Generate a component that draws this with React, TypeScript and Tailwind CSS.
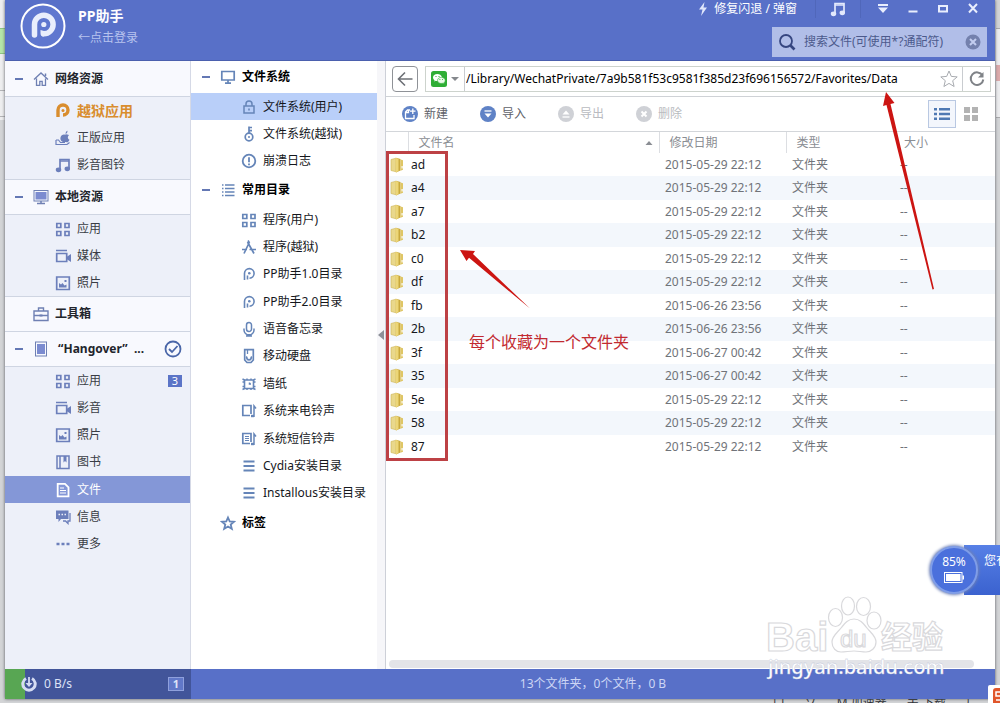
// src/App.tsx

import { ReactNode } from 'react';

type IconName =
  | 'house' | 'pp' | 'apple' | 'music' | 'monitor' | 'apps' | 'video' | 'photo'
  | 'toolbox' | 'tablet' | 'book' | 'file' | 'chat' | 'more' | 'screen' | 'lock'
  | 'key' | 'alert' | 'list' | 'store' | 'ppLine' | 'mic' | 'disk' | 'wall'
  | 'ring' | 'sms' | 'lines' | 'star';

interface Item {
  label: string;
  icon: IconName;
  badge?: string;
  active?: boolean;
  featured?: boolean;
}

interface FileRow {
  name: string;
  date: string;
}

const networkItems: Item[] = [
  { label: '越狱应用', icon: 'pp', featured: true },
  { label: '正版应用', icon: 'apple' },
  { label: '影音图铃', icon: 'music' },
];

const localItems: Item[] = [
  { label: '应用', icon: 'apps' },
  { label: '媒体', icon: 'video' },
  { label: '照片', icon: 'photo' },
];

const deviceItems: Item[] = [
  { label: '应用', icon: 'apps', badge: '3' },
  { label: '影音', icon: 'video' },
  { label: '照片', icon: 'photo' },
  { label: '图书', icon: 'book' },
  { label: '文件', icon: 'file', active: true },
  { label: '信息', icon: 'chat' },
  { label: '更多', icon: 'more' },
];

const systemItems: Item[] = [
  { label: '文件系统(用户)', icon: 'lock', active: true },
  { label: '文件系统(越狱)', icon: 'key' },
  { label: '崩溃日志', icon: 'alert' },
];

const folderItems: Item[] = [
  { label: '程序(用户)', icon: 'apps' },
  { label: '程序(越狱)', icon: 'store' },
  { label: 'PP助手1.0目录', icon: 'ppLine' },
  { label: 'PP助手2.0目录', icon: 'ppLine' },
  { label: '语音备忘录', icon: 'mic' },
  { label: '移动硬盘', icon: 'disk' },
  { label: '墙纸', icon: 'wall' },
  { label: '系统来电铃声', icon: 'ring' },
  { label: '系统短信铃声', icon: 'sms' },
  { label: 'Cydia安装目录', icon: 'lines' },
  { label: 'Installous安装目录', icon: 'lines' },
];

const files: FileRow[] = [
  { name: 'ad', date: '2015-05-29 22:12' },
  { name: 'a4', date: '2015-05-29 22:12' },
  { name: 'a7', date: '2015-05-29 22:12' },
  { name: 'b2', date: '2015-05-29 22:12' },
  { name: 'c0', date: '2015-05-29 22:12' },
  { name: 'df', date: '2015-05-29 22:12' },
  { name: 'fb', date: '2015-06-26 23:56' },
  { name: '2b', date: '2015-06-26 23:56' },
  { name: '3f', date: '2015-06-27 00:42' },
  { name: '35', date: '2015-06-27 00:42' },
  { name: '5e', date: '2015-05-29 22:12' },
  { name: '58', date: '2015-05-29 22:12' },
  { name: '87', date: '2015-05-29 22:12' },
];

const shapes: Record<IconName, ReactNode> = {
  house: (
    <>
      <path d="M1 8.5 8 2l7 6.5M3.500 7.500V14.300h3.300v-4h2.400v4h3.300V7.500" strokeWidth="1.300" />
      <path d="M12.500 5V2.500" />
    </>
  ),
  pp: (
    <>
      <path d="M3 14V7a5 5 0 1 1 5 5" strokeWidth="3.400" />
      <circle cx="8" cy="7.500" r="1.500" fill="currentColor" stroke="none" />
    </>
  ),
  apple: (
    <>
      <path d="M11 4.200c2 0 3 1 3 1-2 1.500-1 4 .500 4.500-.700 1.800-1.800 2.800-2.800 2.500-1-.300-1.500-.300-2.500 0C6.500 12 5 9.800 5.500 7.500c.400-2.500 3-3.500 4.500-2.800zM10.500 4c0-2 1-3 2-3.200 0 1.700-.700 2.900-2 3.200z" fill="currentColor" stroke="none" />
      <path d="M1 10h2.500l2 2.500H10M1 10v4.500h11l2.500-2" strokeWidth="1.200" />
    </>
  ),
  music: (
    <>
      <path d="M5 13V2.500h9V12" strokeWidth="1.700" />
      <path d="M5 4h9" />
      <ellipse cx="3.500" cy="12.800" rx="2" ry="1.600" fill="currentColor" />
      <ellipse cx="12.300" cy="11.800" rx="2" ry="1.600" fill="currentColor" />
    </>
  ),
  monitor: (
    <>
      <rect x="1" y="1.500" width="14" height="10.500" strokeWidth="1" />
      <rect x="2.500" y="3" width="11" height="7.500" fill="#7b8bd0" stroke="none" />
      <path d="M8 12v2M4 14.500h8" />
    </>
  ),
  apps: <path d="M1.800 2.500h4v4h-4zM10 2.500h4v4h-4zM1.800 10.500h4v4h-4zM10 10.500h4v4h-4z" strokeWidth="1.700" />,
  video: (
    <>
      <path d="M1 2.500h11M1.700 5.500h10V13.500h-10z" strokeWidth="1.700" />
      <path d="M11.500 9 16 6v8l-4.500-3z" fill="currentColor" stroke="none" />
    </>
  ),
  photo: (
    <>
      <path d="M1.700 2h12.600v12.500H1.700z" strokeWidth="1.700" />
      <path d="M4 12.500V8l2 1.500L7.500 8l2 2.500 2-1v3z" fill="currentColor" stroke="none" />
      <path d="M9.500 5h2v2h-2z" fill="currentColor" stroke="none" />
    </>
  ),
  toolbox: (
    <>
      <path d="M1 5h14v9.500H1zM1 9.500h14M5.500 5V2h5v3" strokeWidth="1.400" />
      <path d="M6.500 8.500h3v2h-3z" fill="currentColor" stroke="none" />
    </>
  ),
  tablet: (
    <>
      <rect x="2.500" y="1" width="11" height="14" strokeWidth="1" />
      <rect x="4" y="3" width="8" height="10" fill="#7b8bd0" stroke="none" />
    </>
  ),
  book: (
    <>
      <path d="M2 2h12v12.500H2zM5 2v12.500" />
      <path d="M8.500 2H11.500v6.500L10 7 8.500 8.500z" fill="currentColor" stroke="none" />
    </>
  ),
  file: (
    <>
      <path d="M2.700 1.800h7.300l3.500 3.500v9H2.700z" strokeWidth="1.800" />
      <path d="M5 6h4M5 8.500h6M5 11h6" strokeWidth="1.200" />
    </>
  ),
  chat: (
    <>
      <path d="M1 1.500h12.500v8.500H6L3.500 13v-3H1z" fill="currentColor" stroke="none" />
      <path d="M15 4v8h-2v2.500L10.500 12H8" strokeWidth="1.300" />
      <path d="M3.500 5.500h1.500M6.500 5.500H8M9.500 5.500H11" stroke="#edf0f9" />
    </>
  ),
  more: <path d="M1.500 8h3M6.500 8h3M11.500 8h3" strokeWidth="2.500" />,
  screen: <path d="M1.800 2.500h12.400v8.500H1.800zM8 11v2.500M5 14.200h6" strokeWidth="1.700" />,
  lock: (
    <>
      <path d="M3 7h10v7H3zM5 7V5a3 3 0 0 1 6 0v2" />
      <path d="M7.200 9.500h1.600v2H7.200z" fill="currentColor" stroke="none" />
    </>
  ),
  key: (
    <>
      <circle cx="8" cy="11" r="3.800" strokeWidth="1.700" />
      <path d="M8 7.500V.500M8 1.500h3M8 4.700h3" strokeWidth="1.700" />
      <circle cx="8" cy="11" r="1" fill="currentColor" stroke="none" />
    </>
  ),
  alert: (
    <>
      <circle cx="8" cy="8" r="6.300" strokeWidth="1.800" />
      <path d="M8 4.200v5M8 10.500v1.800" strokeWidth="1.800" />
    </>
  ),
  list: <path d="M2 3h1.500M2 6.500h1.500M2 10h1.500M2 13.500h1.500M5 3h9.500M5 6.500h9.500M5 10h9.500M5 13.500h9.500" strokeWidth="1.400" />,
  store: <path d="m8.500 3-5.500 11.500M6.500 3l6.500 11.500M1 10.500h5M8.500 10.500H15M7 1.500l1.200 2" strokeWidth="1.700" />,
  ppLine: (
    <>
      <path d="M3.500 14V7.300a4.800 4.800 0 1 1 5 4.900M6.500 9.500v4" strokeWidth="1.600" />
      <circle cx="8.300" cy="7.300" r="1.300" fill="currentColor" stroke="none" />
    </>
  ),
  mic: <path d="M5.500 4a2.500 2.500 0 0 1 5 0v4a2.500 2.500 0 0 1-5 0zM3 7.500V9a5 5 0 0 0 10 0V7.500M8 13v2M5 15h6" />,
  disk: (
    <>
      <path d="M3.700 1.700h8.600V12L10 14.500H6L3.700 12z" strokeWidth="1.700" />
      <path d="M6.500 2v4" strokeWidth="1.300" />
      <path d="M6 8.500a2.300 2.300 0 1 0 4 0" strokeWidth="1.700" />
    </>
  ),
  wall: (
    <>
      <path d="M3.500 4h9v8.500h-9z" strokeWidth="1.600" />
      <path d="M1.500 3l2 1M14.500 3l-2 1M1.500 13.500l2-1M14.500 13.500l-2-1M1.500 6h1.500M13 6h1.500M1.500 10.500H3M13 10.500h1.500M6 2.500V4M10 2.500V4M6 12.500V14M10 12.500V14M8.500 6.500v1.500h1.500" />
    </>
  ),
  ring: (
    <>
      <path d="M9 12.500H1.800v-10H10V11" strokeWidth="1.700" />
      <path d="M13 14V3l2 2.500" />
      <path d="M10 13h3" strokeWidth="2.400" />
    </>
  ),
  sms: (
    <>
      <path d="M9 12.500H1.800v-10H10V11" strokeWidth="1.700" />
      <path d="M4 5.500h4M4 7.500h4M4 9.500h4" strokeWidth="1" />
      <path d="M13 14V3l2 2.500" />
      <path d="M10 13h3" strokeWidth="2.400" />
    </>
  ),
  lines: <path d="M2.500 3.500h11M2.500 8h11M2.500 12.500h11" strokeWidth="1.800" />,
  star: <path d="m8 2.500 1.700 3.900 4.300.400-3.300 2.800 1.100 4.200L8 11.500l-3.800 2.300 1.100-4.200L2 6.800l4.300-.400z" strokeWidth="1.800" />,
};

function Icon({ name }: { name: IconName }) {
  return (
    <svg viewBox="0 0 16 16" className="size-4 shrink-0" fill="none" stroke="currentColor" strokeWidth="1.5" aria-hidden="true">
      {shapes[name]}
    </svg>
  );
}

function Minus({ hidden }: { hidden?: boolean }) {
  return <span className={`h-0.5 w-2 shrink-0 ${hidden ? '' : 'bg-[#6478b4]'}`} />;
}

function SideHeader({ label, icon, className, leaf, children }: {
  label: string;
  icon: IconName;
  className: string;
  leaf?: boolean;
  children?: ReactNode;
}) {
  return (
    <button className={`w-full flex items-center pl-2.5 pr-2 bg-[#f8f9fe] border-[#cfd5e2] text-left ${className}`}>
      <Minus hidden={leaf} />
      <span className="ml-2.5 mr-1.5 text-[#6f80b3]"><Icon name={icon} /></span>
      <span className="flex-1 font-bold text-[#22252c] whitespace-pre">{label}</span>
      {children}
    </button>
  );
}

function SideItems({ items, className }: { items: Item[]; className: string }) {
  return (
    <ul className={`flex flex-col ${className}`}>
      {items.map(item => (
        <li key={item.label} className="flex-1 flex">
          <button
            className={`flex-1 flex items-center gap-1.5 pl-[50px] pr-2 text-left
              ${item.active ? 'bg-[#8497d7] text-white' : 'text-[#3a3d45]'}`}
          >
            <span className={item.featured ? 'text-[#d98d2e]' : item.active ? 'text-white' : 'text-[#6c7fbb]'}>
              <Icon name={item.icon} />
            </span>
            <span className={`flex-1 ${item.featured ? 'text-sm leading-4 font-bold text-[#d98d2e]' : ''}`}>
              {item.label}
            </span>
            {item.badge && (
              <span className="w-3.5 h-3 bg-[#5b74c7] text-white text-[11px] leading-3 text-center">
                {item.badge}
              </span>
            )}
          </button>
        </li>
      ))}
    </ul>
  );
}

function Sidebar() {
  return (
    <aside className="w-[186px] shrink-0 bg-[#edf0f9] border-r border-[#d5d9e6]">
      <SideHeader label="网络资源" icon="house" className="h-9 border-b" />
      <SideItems items={networkItems} className="h-[82px]" />
      <SideHeader label="本地资源" icon="monitor" className="h-9 border-y" />
      <SideItems items={localItems} className="h-[81px]" />
      <SideHeader label="工具箱" icon="toolbox" className="h-[35px] border-t" leaf />
      <SideHeader label=" “Hangover”  ..." icon="tablet" className="h-9 border-y">
        <svg viewBox="0 0 18 18" className="size-[18px]" fill="none" stroke="#4a66a8" strokeWidth="1.8" aria-hidden="true">
          <circle cx="9" cy="9" r="7.500" />
          <path d="m5 9 3 3 5.500-6" />
        </svg>
      </SideHeader>
      <SideItems items={deviceItems} className="h-[191px]" />
    </aside>
  );
}

function TreeHeader({ label, icon, leaf }: { label: string; icon: IconName; leaf?: boolean }) {
  return (
    <button className="w-full h-8 flex items-center pl-[11px] text-left">
      <Minus hidden={leaf} />
      <span className="ml-2.5 mr-1.5 text-[#6585b8]"><Icon name={icon} /></span>
      <span className="font-bold text-black">{label}</span>
    </button>
  );
}

function TreeItems({ items, className }: { items: Item[]; className: string }) {
  return (
    <ul className={`flex flex-col ${className}`}>
      {items.map(item => (
        <li key={item.label} className="flex-1 flex">
          <button
            className={`flex-1 flex items-center gap-1.5 pl-[50px] text-left text-[#15171c]
              ${item.active ? 'bg-[#b9cff9]' : ''}`}
          >
            <span className="text-[#6585b8]"><Icon name={item.icon} /></span>
            {item.label}
          </button>
        </li>
      ))}
    </ul>
  );
}

function FolderTree() {
  return (
    <nav className="w-[195px] shrink-0 flex border-r border-[#cdd0d8]">
      <div className="flex-1">
        <TreeHeader label="文件系统" icon="screen" />
        <TreeItems items={systemItems} className="h-[81px]" />
        <TreeHeader label="常用目录" icon="list" />
        <TreeItems items={folderItems} className="h-[301px]" />
        <TreeHeader label="标签" icon="star" leaf />
      </div>
      <div className="w-2 bg-[#f6f6f9]">
        <button aria-label="收起" className="mt-[269px] block">
          <svg viewBox="0 0 8 10" className="w-2 h-2.5" fill="#8d9099" aria-hidden="true">
            <path d="M7 0v10L1 5z" />
          </svg>
        </button>
      </div>
    </nav>
  );
}

function TitleBar() {
  return (
    <header className="h-[61px] shrink-0 flex justify-between bg-[#5870c8] border-b border-[#4b60ae] pl-[15px] pr-2">
      <div className="flex gap-3">
        <svg viewBox="0 0 46 46" className="size-[46px] mt-[3px]" fill="none" aria-hidden="true">
          <circle cx="23" cy="23" r="21.500" fill="#5f77cf" stroke="#fff" strokeWidth="2" />
          <path d="M14.500 32V21.500a9.300 9.300 0 1 1 9.300 9.300" stroke="#e9eefc" strokeWidth="5.500" strokeLinecap="round" />
          <path d="M20.500 27v3.200a3.400 3.400 0 0 0 3.500 3.400v-5.500z" fill="#e9eefc" />
          <circle cx="23.800" cy="21.500" r="2.600" fill="#e9eefc" />
        </svg>
        <div className="pt-1.5">
          <h1 className="text-sm leading-5 font-bold text-white">PP助手</h1>
          <a href="#login" className="block leading-6 text-[#b7c3ee]">←点击登录</a>
        </div>
      </div>

      <div className="flex flex-col items-end text-white">
        <div className="h-[18px] flex items-center">
          <button className="flex items-center gap-1.5 mr-[18px]">
            <svg viewBox="0 0 10 14" className="w-2.5 h-3.5" fill="#dfe6fb" aria-hidden="true">
              <path d="M6.500 0 1 7.500h3.500L3 14l6-8.500H5.500z" />
            </svg>
            修复闪退 / 弹窗
          </button>
          <div className="h-full flex items-center px-3.5 border-x border-[#5067ba] text-[#e3e9fc]">
            <button aria-label="音乐"><Icon name="music" /></button>
          </div>
          <div className="flex items-center gap-[18px] ml-4 mr-2 text-[#e9eefd]">
            <button aria-label="菜单">
              <svg viewBox="0 0 12 12" className="size-3" fill="currentColor" aria-hidden="true">
                <path d="M1 1h10v2H1zM1 4.500h10L6 10z" />
              </svg>
            </button>
            <button aria-label="最小化">
              <svg viewBox="0 0 12 12" className="size-3" fill="currentColor" aria-hidden="true">
                <path d="M1.500 7.500h9v2h-9z" />
              </svg>
            </button>
            <button aria-label="最大化">
              <svg viewBox="0 0 12 12" className="size-3" fill="none" stroke="currentColor" strokeWidth="2" aria-hidden="true">
                <path d="M2 3h8v5.500H2z" />
              </svg>
            </button>
            <button aria-label="关闭">
              <svg viewBox="0 0 12 12" className="size-3" fill="none" stroke="currentColor" strokeWidth="2" aria-hidden="true">
                <path d="m2 1 8 8.500M10 1 2 9.500" />
              </svg>
            </button>
          </div>
        </div>
        <div className="mt-[9px] w-[215px] h-[30px] flex items-center gap-2 px-1.5 bg-[#b1bee8]">
          <svg viewBox="0 0 18 18" className="size-[18px] shrink-0" fill="none" stroke="#364680" aria-hidden="true">
            <circle cx="8" cy="8" r="6" strokeWidth="1.800" />
            <path d="m12.500 12.500 4 4" strokeWidth="2.600" />
          </svg>
          <input
            type="text"
            aria-label="搜索文件"
            placeholder="搜索文件(可使用*?通配符)"
            className="flex-1 min-w-0 bg-transparent outline-none placeholder:text-[#4c5a8c]"
          />
          <button aria-label="清除">
            <svg viewBox="0 0 16 16" className="size-4" aria-hidden="true">
              <circle cx="8" cy="8" r="7.500" fill="#7481ad" />
              <path d="m5 5 6 6M11 5l-6 6" stroke="#c3cdef" strokeWidth="2" />
            </svg>
          </button>
        </div>
      </div>
    </header>
  );
}

function AddressBar() {
  return (
    <div className="h-9 flex items-center gap-[7px] pl-1.5 pr-1 border-b border-[#cfd2d6]">
      <button aria-label="返回" className="size-[26px] grid place-items-center rounded-sm border border-[#8f9297]">
        <svg viewBox="0 0 16 16" className="size-4" fill="none" stroke="#6d7076" strokeWidth="1.600" aria-hidden="true">
          <path d="M15.500 8H1.500M8 1.500 1.500 8 8 14.500" />
        </svg>
      </button>
      <div className="flex-1 h-[26px] flex items-center border border-[#cdd3cd]">
        <button aria-label="微信" className="h-full flex items-center gap-1 px-[5px] border-r border-[#c9ccd0]">
          <svg viewBox="0 0 16 16" className="size-4" aria-hidden="true">
            <rect width="16" height="16" rx="2.500" fill="#2fae35" />
            <path d="M6.300 3C3.900 3 2 4.500 2 6.500c0 1.100.600 2.100 1.600 2.700L3.200 10.600l1.600-.800c1 .300 2 .200 2.700 0 3-.500 3.700-2.500 3.300-4C10.300 4.200 8.500 3 6.300 3z" fill="#fff" />
            <path d="M10.300 6.300c2.200 0 3.900 1.300 3.900 3.100 0 1-.500 1.800-1.300 2.400l.300 1.200-1.400-.700c-3 .700-5.300-.900-5.300-2.900 0-1.800 1.700-3.100 3.800-3.100z" fill="#eafbe8" stroke="#2fae35" strokeWidth=".600" />
            <path d="M4.500 5.500h1M7.500 5.500h1M8.500 8.500h.800M11 8.500h.800" stroke="#2fae35" />
          </svg>
          <svg viewBox="0 0 8 8" className="size-2" fill="#85888d" aria-hidden="true">
            <path d="M0 2h8L4 6z" />
          </svg>
        </button>
        <input
          type="text"
          aria-label="路径"
          defaultValue="/Library/WechatPrivate/7a9b581f53c9581f385d23f696156572/Favorites/Data"
          className="flex-1 min-w-0 pl-px text-black bg-transparent outline-none"
        />
        <button aria-label="收藏" className="px-1">
          <svg viewBox="0 0 18 18" className="size-[18px]" fill="none" stroke="#a8abb0" aria-hidden="true">
            <path d="m9 1 2.300 5.400 5.900.500-4.500 3.800 1.400 5.800L9 13.400l-5.100 3.100 1.400-5.800L.800 6.900l5.900-.500z" />
          </svg>
        </button>
        <button aria-label="刷新" className="h-full w-7 grid place-items-center border-l border-[#c9ccd0]">
          <svg viewBox="0 0 16 16" className="size-4" fill="none" stroke="#7f8287" strokeWidth="2" aria-hidden="true">
            <path d="M13.500 4.500A6.300 6.300 0 1 0 14.300 8.500" />
            <path d="M14.500 1v5.500H9z" fill="#7f8287" stroke="none" />
          </svg>
        </button>
      </div>
    </div>
  );
}

function ToolButton({ label, disabled, children }: { label: string; disabled?: boolean; children: ReactNode }) {
  return (
    <button
      disabled={disabled}
      className={`w-[78px] flex items-center gap-1.5 ${disabled ? 'text-[#b9bbc0]' : 'text-[#5e6168]'}`}
    >
      <svg viewBox="0 0 16 16" className="size-4" fill="none" stroke="#fff" strokeWidth="1.300" aria-hidden="true">
        <circle cx="8" cy="8" r="8" fill={disabled ? '#cfd1d6' : '#5f82c6'} stroke="none" />
        {children}
      </svg>
      {label}
    </button>
  );
}

function Toolbar() {
  return (
    <div className="h-[35px] flex items-center pl-4 pr-2.5 border-b border-[#d3d6da]">
      <ToolButton label="新建"><path d="M8 4H5.500L3.500 6v6.500h8.500V9M4 6.500h2.500V4M10.800 2.500v5.500M8 5.200h5.500" /></ToolButton>
      <ToolButton label="导入"><path d="M4.500 5h7" /><path d="M4.500 7.500h7L8 11.500z" fill="#fff" stroke="none" /></ToolButton>
      <ToolButton label="导出" disabled><path d="M4.500 11h7" /><path d="M4.500 8.500h7L8 4.500z" fill="#fff" stroke="none" /></ToolButton>
      <ToolButton label="删除" disabled><path d="m5.500 5.500 5 5M10.500 5.500l-5 5" strokeWidth="2" /></ToolButton>
      <div className="ml-auto flex items-center">
        <button aria-label="列表视图" className="size-7 grid place-items-center border border-[#b9c8e2] bg-[#f3f6fc]">
          <svg viewBox="0 0 16 14" className="w-4 h-3.5" fill="#4f79b3" aria-hidden="true">
            <path d="M0 1h3v2.500H0zM5 1h11v2.500H5zM0 5.800h3v2.500H0zM5 5.800h11v2.500H5zM0 10.600h3v2.500H0zM5 10.600h11v2.500H5z" />
          </svg>
        </button>
        <button aria-label="图标视图" className="w-[29px] grid place-items-center">
          <svg viewBox="0 0 14 14" className="size-3.5" fill="#b3b3b3" aria-hidden="true">
            <path d="M0 0h6v6H0zM8 0h6v6H8zM0 8h6v6H0zM8 8h6v6H8z" />
          </svg>
        </button>
      </div>
    </div>
  );
}

function FolderIcon() {
  return (
    <svg viewBox="0 0 14 16" className="w-3.5 h-4" aria-hidden="true">
      <path d="M1 2.500 6 1.200v13.600l-5-1.300z" fill="#e9d88c" stroke="#cdb455" strokeWidth=".600" />
      <path d="M6 .800 10.500 2v11.500L6 15.500z" fill="#c9a93c" />
      <path d="M5.500.800 8.500 2v12L6 15.500z" fill="#ecd678" />
      <path d="M10.500 2.500 13 3.200v9.600l-2.500 1z" fill="#dfc665" />
      <path d="M11.500 9h1.200v2.500h-1.200z" fill="#fff" />
    </svg>
  );
}

function FileTable() {
  return (
    <table className="w-full table-fixed border-collapse text-left">
      <colgroup>
        <col className="w-[22px]" />
        <col />
        <col className="w-[127px]" />
        <col className="w-[108px]" />
        <col className="w-[101px]" />
      </colgroup>
      <thead>
        <tr className="h-[21px] text-[#8a8d93]">
          <th className="p-0 border-r border-[#dcdee2]" aria-label="图标" />
          <th className="p-0 pl-2.5 font-normal border-r border-[#dcdee2]">
            <span className="flex items-center justify-between pr-1.5">
              文件名
              <svg viewBox="0 0 8 6" className="w-2 h-1.5" fill="#8a8d93" aria-hidden="true">
                <path d="M0.500 5h7L4 1z" />
              </svg>
            </span>
          </th>
          <th className="p-0 pl-2.5 font-normal border-r border-[#dcdee2]">修改日期</th>
          <th className="p-0 pl-2.5 font-normal">类型</th>
          <th className="p-0 pl-2.5 font-normal">大小</th>
        </tr>
      </thead>
      <tbody>
        {files.map(file => (
          <tr key={file.name} className="h-[23px] even:h-6 even:bg-[#f3f7fc] text-[#707379]">
            <td className="p-0 pl-1"><FolderIcon /></td>
            <td className="p-0 pl-[3px] text-[#15171c]">{file.name}</td>
            <td className="p-0 pl-1.5">{file.date}</td>
            <td className="p-0 pl-1.5">文件夹</td>
            <td className="p-0 pl-1.5">--</td>
          </tr>
        ))}
      </tbody>
    </table>
  );
}

// Hand-drawn callouts laid over the file list
function Annotations() {
  return (
    <>
      <div className="absolute left-0 top-[90px] w-[62px] h-[310px] border-3 border-[#bd4145] pointer-events-none" />
      <svg viewBox="0 0 90 70" className="absolute left-[70px] top-[185px] w-[90px] h-[70px] pointer-events-none" aria-hidden="true">
        <path d="M4 4 10.500 15l2.500-3.200L74 62.500 17 8l2-3z" fill="#cc1512" />
      </svg>
      <p className="absolute left-[83px] top-[269px] text-base leading-6 text-[#c22a30] pointer-events-none">
        每个收藏为一个文件夹
      </p>
      <svg viewBox="0 0 70 210" className="absolute right-[50px] top-[25px] w-[70px] h-[210px] pointer-events-none" aria-hidden="true">
        <path d="M11 6 8 20l3.500-1L57.500 203.500l1.500-.500L15.500 18l4-1z" fill="#cc1512" />
      </svg>
    </>
  );
}

function BatteryWidget() {
  return (
    <div className="absolute right-0 top-[542px] w-[74px] h-14 text-white">
      <div className="absolute right-0 top-[3px] w-9 h-[50px] pl-[20px] pt-2 bg-linear-to-b from-[#5780e6] to-[#3b62cf] overflow-hidden whitespace-nowrap">
        您有
      </div>
      <div className="absolute left-1 top-1 size-12 rounded-full border-2 border-[#7f9de8] bg-[#4a70dc] shadow-[0_0_3px_1px_#6f82b8] flex flex-col items-center pt-1.5">
        <span className="leading-4">85%</span>
        <svg viewBox="0 0 20 11" className="w-5 h-[11px] mt-0.5" fill="none" aria-hidden="true">
          <rect x=".500" y=".500" width="17.500" height="10" stroke="#fff" />
          <rect x="2" y="2" width="14.500" height="7" fill="#fff" />
          <path d="M18.500 3.500H20v4h-1.500z" fill="#fff" />
        </svg>
      </div>
    </div>
  );
}

function Watermark() {
  return (
    <svg
      viewBox="0 0 190 90"
      className="absolute right-[46px] bottom-[19px] w-[190px] h-[90px] pointer-events-none font-['Liberation_Sans','Noto_Sans_CJK_SC',sans-serif]"
      fill="#fff"
      stroke="#d9d9dc"
      strokeWidth="1.200"
      aria-hidden="true"
    >
      <text x="2" y="57" fontSize="40" fontWeight="700">Bai</text>
      <ellipse cx="71.500" cy="23.500" rx="7" ry="9" />
      <ellipse cx="84" cy="12" rx="6.500" ry="9" />
      <ellipse cx="99.500" cy="12.500" rx="7" ry="9" />
      <ellipse cx="110" cy="26.500" rx="7" ry="8.500" />
      <path d="M90 25c6 0 9 4 13 9s9 8 9 14-5 10-10 10c-4 0-8-1-12-1s-9 1-13 1c-5 0-9-4-9-10s5-9 9-14 7-9 13-9z" />
      <text x="76" y="53" fontSize="24">du</text>
      <text x="117" y="54" fontSize="31" fontWeight="700">经验</text>
      <text x="4" y="80" fontSize="20" fontWeight="500" stroke="#b9bfd6" strokeWidth=".300" className="font-['Noto_Sans',sans-serif]">jingyan.baidu.com</text>
    </svg>
  );
}

function StatusBar() {
  return (
    <footer className="h-[30px] shrink-0 flex items-center bg-[#5870c8] text-[#cdd6f5]">
      <div className="w-[186px] h-full shrink-0 flex">
        <div className="w-5 bg-[#58a653]" />
        <div className="flex-1 flex items-center bg-[#42559a] pr-[7px] text-[#dde3f7]">
          <svg viewBox="0 0 16 16" className="size-4 -ml-1 mr-[7px]" fill="none" stroke="#d5dcf3" aria-hidden="true">
            <path d="M5 2.500a6.200 6.200 0 1 0 6 0" strokeWidth="3" />
            <path d="M8 1v7" strokeWidth="1.800" />
            <path d="M4.500 7h7L8 11z" fill="#d5dcf3" stroke="none" />
          </svg>
          <span className="flex-1">0 B/s</span>
          <span className="w-4 h-3.5 border border-[#8fa0dc] bg-[#6178c8] text-[11px] leading-3 text-center font-bold">1</span>
        </div>
      </div>
      <p className="flex-1 text-center">13个文件夹，0个文件，0 B</p>
    </footer>
  );
}

// Slivers of the browser page that stay visible round the window
function Backdrop() {
  return (
    <div className="absolute inset-0 bg-[#d3d4d6] overflow-hidden" aria-hidden="true">
      <div className="w-[5px] h-[120px] bg-[#eeeeef] pt-7">
        <div className="h-[26px] bg-[#b5e6a8] border-y border-[#8ec583]" />
        <div className="mt-9 h-[27px] border-y border-[#b4b4b6]" />
      </div>
      <div className="absolute right-0 top-7 w-1 h-[90px] bg-[#ececee] border-y border-[#aaaaac] pt-9">
        <div className="h-4 bg-[#dcaaaa]" />
      </div>
      <div className="absolute right-[22px] -bottom-2 flex gap-5 leading-4 text-[#303236]">
        <span>口</span>
        <span>ゾ</span>
        <span>M 加速器</span>
        <span>关 下载</span>
        <span>厂</span>
      </div>
    </div>
  );
}

export default function App() {
  return (
    <div
      lang="zh-CN"
      className="relative h-screen overflow-hidden flex flex-col px-[5px] pb-1 text-xs font-['Noto_Sans','Noto_Sans_CJK_SC',sans-serif]"
    >
      <Backdrop />
      <div className="relative flex-1 min-h-0 flex flex-col bg-white shadow-[0_0_3px_#55585f]">
        <TitleBar />
        <div className="flex-1 min-h-0 flex">
          <Sidebar />
          <FolderTree />
          <main className="relative flex-1 min-w-0 flex flex-col">
            <AddressBar />
            <Toolbar />
            <FileTable />
            <div className="mt-auto mb-px ml-[3px] mr-[21px] h-2 rounded-full bg-[#e3e4e8]" />
            <Annotations />
          </main>
        </div>
        <StatusBar />
      </div>
      <BatteryWidget />
      <Watermark />
      <svg viewBox="0 0 12 18" className="absolute right-0 bottom-0 w-3 h-[18px]" aria-hidden="true">
        <rect width="16" height="22" rx="2" fill="#fff" />
        <rect x="5" y="3" width="12" height="20" rx="3" fill="#e0562b" />
        <path d="M12 7H8v4h4M8 15h4" stroke="#fff" strokeWidth="1.500" fill="none" />
      </svg>
    </div>
  );
}
